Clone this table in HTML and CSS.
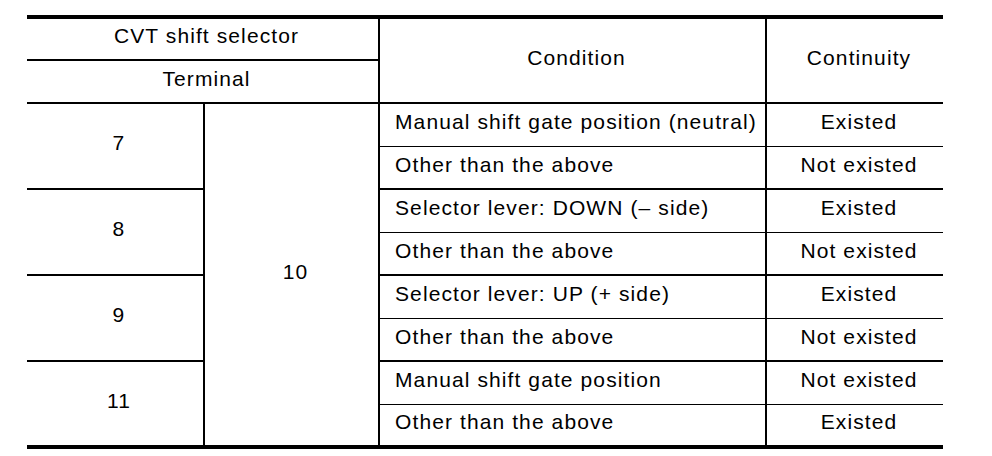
FILE: index.html
```html
<!DOCTYPE html>
<html>
<head>
<meta charset="utf-8">
<link rel="stylesheet" href="styles.css">
</head>
<body>
<table class="spec">
  <colgroup>
    <col class="w1">
    <col class="w2">
    <col class="w3">
    <col class="w4">
  </colgroup>
  <tr class="h1">
    <td class="c b2 r2" colspan="2">CVT shift selector</td>
    <td class="c b2 r2" rowspan="2">Condition</td>
    <td class="c b2" rowspan="2">Continuity</td>
  </tr>
  <tr class="h2">
    <td class="c b2 r2" colspan="2">Terminal</td>
  </tr>
  <tr class="row">
    <td class="c b2 r2" rowspan="2">7</td>
    <td class="c r2" rowspan="8">10</td>
    <td class="l b1 r2">Manual shift gate position (neutral)</td>
    <td class="c b1">Existed</td>
  </tr>
  <tr class="row">
    <td class="l b2 r2">Other than the above</td>
    <td class="c b2">Not existed</td>
  </tr>
  <tr class="row">
    <td class="c b2 r2" rowspan="2">8</td>
    <td class="l b1 r2">Selector lever: DOWN (– side)</td>
    <td class="c b1">Existed</td>
  </tr>
  <tr class="row">
    <td class="l b2 r2">Other than the above</td>
    <td class="c b2">Not existed</td>
  </tr>
  <tr class="row">
    <td class="c b2 r2" rowspan="2">9</td>
    <td class="l b1 r2">Selector lever: UP (+ side)</td>
    <td class="c b1">Existed</td>
  </tr>
  <tr class="row">
    <td class="l b2 r2">Other than the above</td>
    <td class="c b2">Not existed</td>
  </tr>
  <tr class="row">
    <td class="c r2" rowspan="2">11</td>
    <td class="l b1 r2">Manual shift gate position</td>
    <td class="c b1">Not existed</td>
  </tr>
  <tr class="last">
    <td class="l r2">Other than the above</td>
    <td class="c">Existed</td>
  </tr>
</table>
</body>
</html>
```

FILE: styles.css
```css
html, body {
  margin: 0;
  padding: 0;
  background: #ffffff;
}

body {
  padding: 15px 0 0 27px;
  font-family: "Liberation Sans", Arial, sans-serif;
  color: #000000;
}

.spec {
  border-collapse: separate;
  border-spacing: 0;
  width: 916px;
  table-layout: fixed;
  border-top: 4px solid #000;
  border-bottom: 4px solid #000;
  font-size: 21px;
  letter-spacing: 1.1px;
  line-height: 22px;
}

.w1 { width: 178px; }
.w2 { width: 175px; }
.w3 { width: 387px; }
.w4 { width: 176px; }

.spec td {
  padding: 0 0 6px 0;
  vertical-align: middle;
  white-space: nowrap;
}

.spec tr.h1 { height: 42px; }
.spec tr.h2 { height: 43px; }
.spec tr.row { height: 43px; }
.spec tr.last { height: 40px; }

.spec td.c {
  text-align: center;
  padding-left: 8px;
}

.spec td.l {
  text-align: left;
  padding-left: 15px;
}

.r2 { border-right: 2px solid #000; }
.b2 { border-bottom: 2px solid #000; }
.b1 { border-bottom: 1px solid #000; }
```
